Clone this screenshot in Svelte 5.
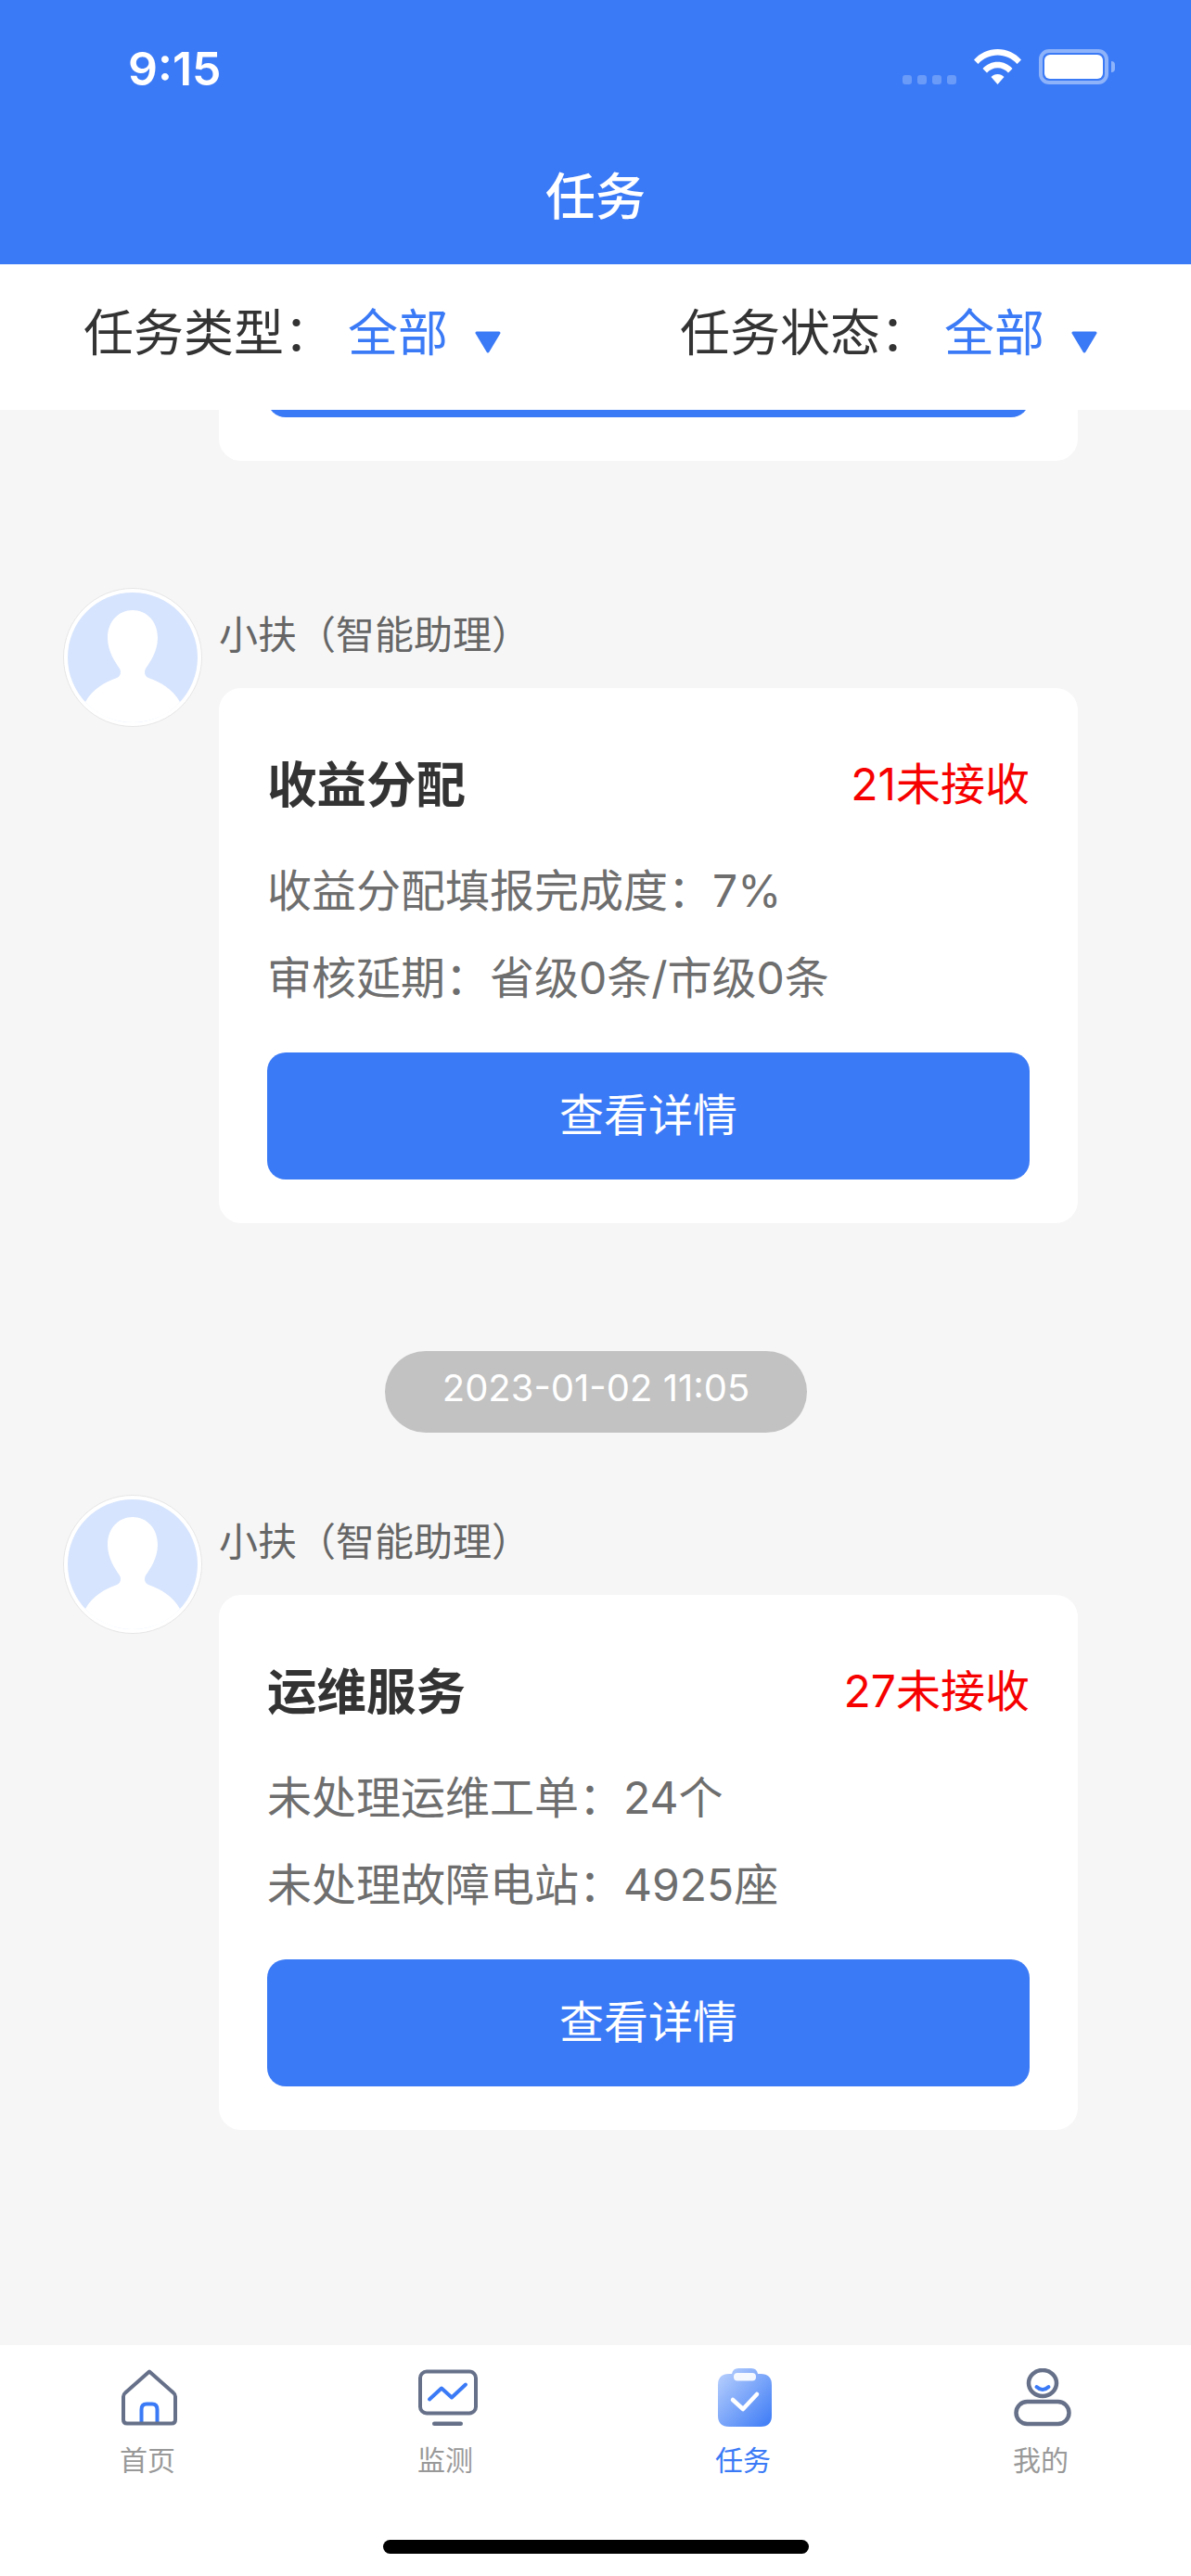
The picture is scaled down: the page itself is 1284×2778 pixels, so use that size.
<script>
  const sections = [
    { time: null, title: '收益分配', badge: '21未接收', lines: ['收益分配填报完成度：7%', '审核延期：省级0条/市级0条'] },
    { time: '2023-01-02 11:05', title: '运维服务', badge: '27未接收', lines: ['未处理运维工单：24个', '未处理故障电站：4925座'] }
  ];
  const filters = [
    { label: '任务类型：', value: '全部' },
    { label: '任务状态：', value: '全部' }
  ];
</script>

<div class="page">
  <header class="head">
    <div class="status">
      <span class="clock">9:15</span>
      <div class="sys">
        <div class="dots"><i></i><i></i><i></i><i></i></div>
        <svg class="wifi" width="51" height="38" viewBox="0 0 51 38"><path fill="#fff" d="M0 11.500C6.500 4.200 15.500 0 25.500 0S44.500 4.200 51 11.500L46.500 16C41 10 33.500 6.500 25.500 6.500S10 10 4.500 16Z"/><path fill="#fff" d="M9.500 21C13.500 16.500 19.300 13.800 25.500 13.800S37.500 16.500 41.500 21L37 25.500C34 22.300 30 20.300 25.500 20.300S17 22.300 14 25.500Z"/><path fill="#fff" d="M18.500 30C20.300 28.200 22.800 27 25.500 27S30.700 28.200 32.500 30L25.500 38Z"/></svg>
        <div class="batt"><div class="cell"></div></div>
        <div class="cap"></div>
      </div>
    </div>
    <h1>任务</h1>
  </header>

  <div class="filters">
    {#each filters as f}
      <div class="filter">
        <span class="flabel">{f.label}</span>
        <span class="fvalue">{f.value}</span>
        <svg class="tri" width="28" height="24" viewBox="0 0 28 24"><path d="M2 2H26L14 22Z" fill="#3b7af6" stroke="#3b7af6" stroke-width="3" stroke-linejoin="round"/></svg>
      </div>
    {/each}
  </div>

  <main class="list">
    <div class="card stub"><div class="stubbtn"></div></div>

    {#each sections as s}
      {#if s.time}<div class="pill">{s.time}</div>{/if}
      <section class="msg">
        <svg class="avatar" width="150" height="150" viewBox="0 0 150 150">
          <circle cx="75" cy="75" r="74.500" fill="#fff" stroke="#e6e6e6"/>
          <circle cx="75" cy="75" r="70" fill="#d6e4fd"/>
          <path fill="#fff" d="M75 24C60 24 48 36 48 54C48 68 56 80 61 87C63 91 62 95 58 97C44 102 32 109 24 123C36 137 55 145 75 145S114 137 126 123C118 109 106 102 92 97C88 95 87 91 89 87C94 80 102 68 102 54C102 36 90 24 75 24Z"/>
        </svg>
        <div class="body">
          <div class="name">小扶（智能助理）</div>
          <div class="card">
            <div class="top">
              <span class="title">{s.title}</span>
              <span class="badge">{s.badge}</span>
            </div>
            {#each s.lines as l}<p class="line">{l}</p>{/each}
            <div class="btn">查看详情</div>
          </div>
        </div>
      </section>
    {/each}
  </main>

  <nav class="tabs">
    <div class="tab">
      <svg width="60" height="60" viewBox="0 0 60 60" fill="none">
        <path d="M21.500 57V43Q21.500 37 27 37H33Q38.500 37 38.500 43V57" stroke="#3b7af6" stroke-width="4"/>
        <path d="M30 2L56 25Q58 26.500 58 29V54Q58 58 54 58H6Q2 58 2 54V29Q2 26.500 4 25Z" stroke="#667189" stroke-width="4" stroke-linejoin="round"/>
      </svg>
      <span>首页</span>
    </div>
    <div class="tab">
      <svg class="monitor" width="64" height="60" viewBox="0 0 64 60" fill="none">
        <rect x="2" y="2" width="60" height="45" rx="7" stroke="#667189" stroke-width="4"/>
        <path d="M12 32L25 20L36 30L51 16" stroke="#3b7af6" stroke-width="4" stroke-linecap="round" stroke-linejoin="round"/>
        <rect x="15" y="56" width="33" height="4.500" rx="2.200" fill="#667189"/>
      </svg>
      <span>监测</span>
    </div>
    <div class="tab active">
      <svg width="58" height="63" viewBox="0 0 58 63" fill="none">
        <defs><linearGradient id="clip" x1="0" y1="0" x2="1" y2="1"><stop offset="0" stop-color="#bdd3fd"/><stop offset="1" stop-color="#3b7af6"/></linearGradient></defs>
        <path d="M15 6Q16 0 22 0H36Q42 0 43 6H46Q58 6 58 18V51Q58 63 46 63H12Q0 63 0 51V18Q0 6 12 6Z" fill="url(#clip)"/>
        <rect x="17" y="5" width="24" height="8.500" rx="4" fill="#fff" fill-opacity="0.9"/>
        <path d="M16 34L27 44L42 28" stroke="#fff" stroke-width="4.500" stroke-linecap="round" stroke-linejoin="round"/>
      </svg>
      <span>任务</span>
    </div>
    <div class="tab">
      <svg width="62" height="63" viewBox="0 0 62 63" fill="none">
        <ellipse cx="31" cy="16" rx="15" ry="14" stroke="#667189" stroke-width="4.500"/>
        <path d="M24.500 20Q31 26 37.500 20" stroke="#3b7af6" stroke-width="4" stroke-linecap="round"/>
        <rect x="2.500" y="36" width="57" height="24" rx="12" stroke="#667189" stroke-width="4.500"/>
      </svg>
      <span>我的</span>
    </div>
    <div class="homebar"></div>
  </nav>
</div>

<style>
  :global(body) { margin: 0; background: #f6f6f6; }
  .page {
    width: 1284px; height: 2778px; display: flex; flex-direction: column; overflow: hidden;
    font-family: Inter, "Noto Sans CJK SC", sans-serif; background: #f6f6f6;
  }
  .head { height: 285px; background: #3b7af6; color: #fff; flex: none; box-sizing: border-box; }
  .status { height: 146px; display: flex; justify-content: space-between; padding: 48px 82px 0 138px; box-sizing: border-box; }
  .clock { font-size: 50px; font-weight: 600; line-height: 52px; letter-spacing: 0; }
  .sys { display: flex; align-items: flex-start; padding-top: 5px; }
  .dots { display: flex; gap: 6px; margin-top: 28px; margin-right: 19px; }
  .dots i { width: 10px; height: 10px; border-radius: 3px; background: #6b9bf8; display: block; }
  .wifi { margin-right: 19px; }
  .batt { width: 75px; height: 38px; box-sizing: border-box; border: 4px solid #8eb3fa; border-radius: 11px; padding: 2px; }
  .cell { width: 100%; height: 100%; background: #fff; border-radius: 6px; }
  .cap { width: 4px; height: 12px; margin: 13px 0 0 3px; background: #8eb3fa; border-radius: 0 4px 4px 0; }
  h1 { margin: 29px 0 0; text-align: center; font-size: 54px; font-weight: 500; line-height: 76px; }

  .filters { height: 157px; background: #fff; flex: none; display: flex; padding: 0 0 16px 90px; box-sizing: border-box; position: relative; z-index: 1; }
  .filter { flex: none; width: 643px; display: flex; align-items: center; }
  .flabel { flex: none; font-size: 54px; color: #333; width: 285px; }
  .fvalue { flex: none; font-size: 54px; color: #3b7af6; width: 137px; }
  .tri { flex: none; margin-top: 27px; }

  .list { flex: 1; min-height: 0; overflow: hidden; }
  .card { background: #fff; border-radius: 24px; width: 926px; box-sizing: border-box; padding: 52px; }
  .stub { margin: -100px 0 137px 236px; height: 155px; padding-top: 0; }
  .stubbtn { height: 108px; background: #3b7af6; border-radius: 20px; }
  .msg { display: flex; align-items: flex-start; gap: 18px; padding-left: 68px; margin-bottom: 138px; }
  .avatar { flex: none; display: block; }
  .name { font-size: 42px; color: #666; line-height: 60px; height: 108px; box-sizing: border-box; padding-top: 21px; }
  .top { display: flex; justify-content: space-between; align-items: center; height: 72px; margin-bottom: 47px; margin-top: 12px; }
  .title { font-size: 53.500px; font-weight: 700; color: #333; }
  .badge { font-size: 48px; color: #f60000; }
  .line { margin: 0; font-size: 48px; color: #6e6e6e; line-height: 72px; height: 94px; }
  .btn { height: 137px; box-sizing: border-box; padding-bottom: 10px; background: #3b7af6; border-radius: 20px; color: #fff; font-size: 48px; display: flex; align-items: center; justify-content: center; margin-top: 22px; margin-bottom: -5px; }
  .pill { width: 455px; height: 88px; margin: 0 0 67px 415px; border-radius: 44px; background: #c2c2c2; color: #fff; font-size: 40px; display: flex; align-items: center; justify-content: center; padding-bottom: 10px; box-sizing: border-box; }

  .tabs { height: 249px; flex: none; background: #fff; display: grid; grid-template-columns: repeat(4, 321px); position: relative; }
  .tab { display: flex; flex-direction: column; align-items: center; height: 145px; padding-top: 25px; box-sizing: border-box; font-size: 30px; color: #999; position: relative; }
  .tab svg { display: block; height: 63px; }
  .tab .monitor { margin-left: 3px; }
  .tab span { margin: 16px 3px 0 0; line-height: 40px; }
  .tab.active { color: #3b7af6; }
  .homebar { position: absolute; left: 413px; top: 210px; width: 459px; height: 15px; border-radius: 8px; background: #000; }
</style>
